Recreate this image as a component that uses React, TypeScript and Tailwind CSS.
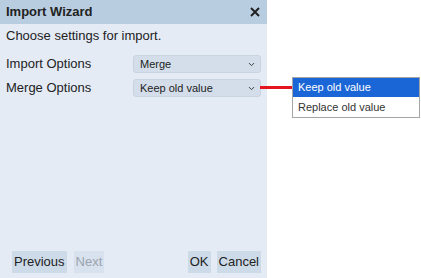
import { ChevronDown } from 'lucide-react';

const font = { fontFamily: '"Liberation Sans", Arial, sans-serif' };

function SelectBox({ value }: { value: string }) {
  return (
    <div className="flex h-[18px] w-[128px] items-center justify-between rounded-[3px] border border-[#c9d4e1] bg-[#d3deea] pl-[6px] pr-[4px] text-[11px] text-[#222]">
      <span>{value}</span>
      <ChevronDown className="h-[9px] w-[9px] text-[#333]" strokeWidth={2.5} />
    </div>
  );
}

function FooterButton({ label, disabled }: { label: string; disabled?: boolean }) {
  return (
    <button
      className={`h-[22px] px-[2px] text-[13px] ${disabled ? 'bg-[#d8e2ee] text-[#9aa3ad]' : 'bg-[#cddbe9] text-[#222]'}`}
    >
      {label}
    </button>
  );
}

export default function App() {
  return (
    <div className="relative h-[278px] w-[421px] bg-white" style={font}>
      <div className="flex h-[278px] w-[267px] flex-col bg-[#e4ebf5]">
        <div className="flex h-[24px] items-center justify-between bg-[#b9cde0] pl-[6px] pr-[6px]">
          <span className="text-[13px] font-bold text-[#222]">Import Wizard</span>
          <svg width="10" height="10" viewBox="0 0 10 10" className="mr-[1px]">
            <path d="M1 1 L9 9 M9 1 L1 9" stroke="#222" strokeWidth="2" />
          </svg>
        </div>
        <div className="flex flex-1 flex-col px-[6px] pt-[2px]">
          <div className="text-[13px] leading-[19px] text-[#222]">Choose settings for import.</div>
          <div className="mt-[10px] flex flex-col gap-[6px]">
            <div className="flex items-center justify-between">
              <span className="text-[13px] leading-[18px] text-[#222]">Import Options</span>
              <SelectBox value="Merge" />
            </div>
            <div className="flex items-center justify-between">
              <span className="text-[13px] leading-[18px] text-[#222]">Merge Options</span>
              <SelectBox value="Keep old value" />
            </div>
          </div>
          <div className="mt-auto mb-[5px] flex items-center justify-between pl-[6px]">
            <div className="flex gap-[7px]">
              <FooterButton label="Previous" />
              <FooterButton label="Next" disabled />
            </div>
            <div className="flex gap-[6px]">
              <FooterButton label="OK" />
              <FooterButton label="Cancel" />
            </div>
          </div>
        </div>
      </div>
      <div className="absolute left-[260px] top-[86px] h-[3px] w-[33px] bg-[#e3161f]" />
      <div className="absolute left-[292px] top-[77px] w-[128px] border border-[#a5a5a5] bg-white text-[11px]">
        <div className="flex h-[19px] items-center bg-[#1a66d6] pl-[5px] text-white">Keep old value</div>
        <div className="flex h-[20px] items-center pl-[5px] text-[#333]">Replace old value</div>
      </div>
    </div>
  );
}
